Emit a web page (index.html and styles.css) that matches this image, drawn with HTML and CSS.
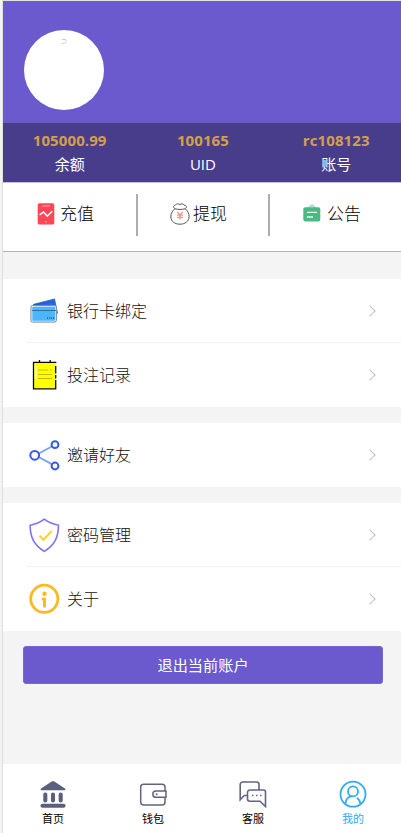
FILE: index.html
```html
<!DOCTYPE html>
<html lang="zh-CN">
<head>
<meta charset="utf-8">
<title>我的</title>
<link rel="stylesheet" href="styles.css">
</head>
<body>
<div class="app">
  <header class="profile"><div class="avatar"><span class="avatar-mark">⊃</span></div></header>
  <section class="stats">
    <div class="stat"><b>105000.99</b><span>余额</span></div>
    <div class="stat"><b>100165</b><span>UID</span></div>
    <div class="stat"><b>rc108123</b><span>账号</span></div>
  </section>
  <section class="actions">
    <div class="action">
      <svg width="18" height="22" viewBox="0 0 18 22"><rect x=".7" y=".3" width="16.6" height="21.2" rx="1.6" fill="#ff4656"/><path d="M5 2.9h8" stroke="#ffa0aa" stroke-width="1.2"/><path d="M2.5 11.8l4-2.7 3.8 4 5-4.8" fill="none" stroke="#fff" stroke-width="1.5"/><circle cx="9" cy="18.8" r=".8" fill="#ffb5bc"/></svg>
      <span>充值</span>
    </div>
    <div class="action">
      <svg width="20" height="22" viewBox="0 0 20 22"><path d="M4.8 5.8C3 4.2 3.3 2.2 5.4 2.2 6.6.2 8.5.5 9.8 1.7c1.5-1.3 3.5-1.1 4.4.5 2.3-.2 3 2 1.1 3.6 2.5 2.2 4 5 3.8 8-.3 4.5-4 7.4-9.2 7.4S1 18.3.8 14c-.1-3.2 1.5-6.1 4-8.2zM5 5.8c3 .8 7 .8 10.2 0" fill="#fff" stroke="#555" stroke-width="1"/><path d="M7.3 9l2.7 3 2.7-3M7 12.2h6M7 14.4h6M10 12v4.4" fill="none" stroke="#ff9189" stroke-width="1.3"/></svg>
      <span>提现</span>
    </div>
    <div class="action">
      <svg width="18" height="22" viewBox="0 0 18 22"><path d="M5 5.5l4-3.4 4 3.4" fill="none" stroke="#a3dcc2" stroke-width="1.8"/><rect x=".3" y="4.3" width="17" height="14.3" rx="2" fill="#4aba85"/><path d="M4 9.4h10M4 14h6" stroke="#e5fff2" stroke-width="1.4"/></svg>
      <span>公告</span>
    </div>
  </section>
  <main class="menus">
    <div class="group">
      <div class="row">
        <svg class="icon" viewBox="0 0 32 32"><path d="M4 9.5l21.5-5.5L28.5 18l-3 2z" fill="#236bf5"/><path d="M4 9.5l21.5-5.5 3 14.5" fill="none" stroke="#24589e" stroke-width=".8"/><path d="M5 9.8l21-3" stroke="#2558b0" stroke-width=".8"/><rect x="2.5" y="11" width="24.5" height="15.6" rx="1.5" fill="#4db5fc" stroke="#e7edf3" stroke-width="1.7"/><rect x="1.9" y="10.4" width="25.5" height="16.7" rx="1.7" fill="none" stroke="#456780" stroke-width=".7"/><path d="M3 15.5h24" stroke="#28699b" stroke-width=".9"/><path d="M18 23h7" stroke="#315d7c" stroke-width="1.7" stroke-dasharray="1 1"/></svg>
        <span>银行卡绑定</span><i class="arrow"></i>
      </div>
      <div class="row">
        <svg class="icon" viewBox="0 0 32 32"><rect x="4.5" y="3.4" width="22.2" height="26.4" rx=".8" fill="#ff0"/><path d="M26.7 4V3.4H4.5v26.4h22.2V21M26.7 7v7.5M26.7 16v3.5M10.5 1v2.5M21.2 1v2.5" fill="none" stroke="#090909" stroke-width="1.3"/><path d="M6.7 6v14" stroke="#ffffad" stroke-width="2"/><path d="M9 11h10M21 11h2M9 15.5h14M9 19.5h14" stroke="#aead00" stroke-width=".8"/></svg>
        <span>投注记录</span><i class="arrow"></i>
      </div>
    </div>
    <div class="group">
      <div class="row">
        <svg class="icon" viewBox="0 0 32 32"><path d="M6.5 16.2L26 5.8M6.5 16.2L26 26.9" stroke="#79a0ff" stroke-width="1.8"/><g fill="#fff" stroke="#3459ec" stroke-width="2"><circle cx="5.7" cy="16.3" r="4.4"/><circle cx="26" cy="5.7" r="3.4"/><circle cx="26" cy="27" r="3.4"/></g></svg>
        <span>邀请好友</span><i class="arrow"></i>
      </div>
    </div>
    <div class="group">
      <div class="row">
        <svg class="icon tall" viewBox="0 0 32 36"><path d="M15.3 2.2c4.5 3.5 9 5.3 14.2 6-.2 12.5-4 19.8-14.2 26.2C5.1 28 1.3 20.7 1.1 8.2c5.2-.7 9.7-2.5 14.2-6z" fill="none" stroke="#8370f4" stroke-width="1.6"/><path d="M10.5 18.7l4 4 8.2-8.8" fill="none" stroke="#ffd414" stroke-width="2"/></svg>
        <span>密码管理</span><i class="arrow"></i>
      </div>
      <div class="row">
        <svg class="icon" viewBox="0 0 32 32"><circle cx="15.3" cy="15.8" r="13.6" fill="none" stroke="#ffb924" stroke-width="2.8"/><circle cx="15.5" cy="10.8" r="2.2" fill="#ffb924"/><path d="M14 15.9h1.5v7.4" fill="none" stroke="#ffb924" stroke-width="3" stroke-linecap="round" stroke-linejoin="round"/></svg>
        <span>关于</span><i class="arrow"></i>
      </div>
    </div>
    <button class="logout">退出当前账户</button>
  </main>
  <nav class="tabs">
    <div class="tab"><svg viewBox="0 0 28 28"><path d="M1.7 10.2V8.7L13 1.2h2l11.3 7.5v1.5z" fill="#5b5f7e"/><path d="M6.3 14.5v6M14 14.5v6M21.7 14.5v6" stroke="#5b5f7e" stroke-width="4.1" stroke-linecap="round"/><rect x="1.5" y="23.8" width="25" height="4" rx="1.8" fill="#5b5f7e"/></svg><span>首页</span></div>
    <div class="tab"><svg viewBox="0 0 28 28"><rect x="1.7" y="4.2" width="24.3" height="20.7" rx="3" fill="none" stroke="#62657f" stroke-width="1.5"/><path d="M27 11H17a3 3 0 0 0 0 6.3h10z" fill="#fff" stroke="#62657f" stroke-width="1.5"/><circle cx="17.6" cy="14.2" r="1" fill="#62657f"/></svg><span>钱包</span></div>
    <div class="tab"><svg viewBox="0 0 28 28"><path d="M20 10V4.5a2.5 2.5 0 0 0-2.5-2.5H3.7a2.5 2.5 0 0 0-2.5 2.5v15.3l4-4.3h3.2" fill="none" stroke="#62657f" stroke-width="1.6"/><path d="M11 10h13.5a2 2 0 0 1 2 2v14.5L21 21.2H11a2.5 2.5 0 0 1-2.5-2.5v-6.2A2.5 2.5 0 0 1 11 10z" fill="#fff" stroke="#62657f" stroke-width="1.6"/><path d="M13 15.5h1.5M17 15.5h1.5M21 15.5h1.5" stroke="#62657f" stroke-width="1.5"/></svg><span>客服</span></div>
    <div class="tab active"><svg viewBox="0 0 28 28"><g fill="none" stroke="#2eaaf7" stroke-width="1.8"><circle cx="14" cy="14.2" r="12.5"/><circle cx="14" cy="11.4" r="5"/><path d="M6.5 23.5c.3-4 2.4-6.5 5.5-7.2M18.4 18.3c1.5 1 2.5 2.6 2.8 4.8" stroke-linecap="round"/></g></svg><span>我的</span></div>
  </nav>
</div>
</body>
</html>
```

FILE: styles.css
```css
* { box-sizing: border-box; }
body { margin: 0; background: #f4f4f4; color: #111; font-family: "Open Sans", "Noto Sans CJK SC", sans-serif; }
svg { display: block; flex: none; }
.app { width: 401px; height: 833px; padding: 1px 0 0 3px; display: flex; flex-direction: column; overflow: hidden; background: #f4f4f4; box-shadow: inset 2px 0 #f3f3f3, inset 3px 0 #dedede, inset 0 1px #e2e2e2; }
.profile { height: 122px; flex: none; padding: 28.5px 21px; background: #6a5acd; }
.avatar { width: 80px; height: 80px; border-radius: 50%; background: #fff; text-align: center; }
.avatar-mark { display: block; padding-top: 7px; font-size: 6px; line-height: 9px; color: #aaa; }
.stats { height: 60px; flex: none; display: grid; grid-template-columns: repeat(3, 133.3px); padding-top: 5px; background: #483d8b; border-bottom: 1px solid #c5c0df; color: #fff; }
.stat { display: flex; flex-direction: column; align-items: center; font-size: 15px; line-height: 24px; }
.stat b { color: #d2a04a; letter-spacing: .1px; }
.actions { height: 69px; flex: none; display: grid; grid-template-columns: 133px 132px 133px; padding-top: 11px; background: #fff; border-bottom: 1px solid #b2b2b2; }
.action { height: 42px; display: flex; align-items: flex-start; gap: 5px; padding-left: 34px; font-size: 17px; font-weight: 300; line-height: 39px; color: #000; }
.action svg { margin-top: 9px; }
.action + .action { border-left: 2px solid #adadad; padding-left: 33px; }
.action:nth-child(2) { gap: 3px; padding-left: 32px; }
.action:nth-child(3) { gap: 6px; }
.menus { flex: 1; padding-top: 26.5px; }
.group { margin-bottom: 16px; background: #fff; }
.row { height: 64px; display: flex; align-items: center; padding: 0 25px 0 26px; position: relative; font-size: 16px; font-weight: 300; }
.row + .row::before { content: ""; position: absolute; left: 24px; right: 0; top: -1px; height: 1.5px; background: #f1f1f1; }
.icon { width: 32px; height: 32px; margin-right: 6px; }
.icon.tall { height: 36px; }
.row span { line-height: 24px; }
.arrow { width: 8px; height: 8px; margin-left: auto; margin-right: 2px; border: solid #c4c4c4; border-width: 1px 1px 0 0; transform: rotate(45deg); }
.logout { display: block; width: 360px; height: 38px; margin-top: -1px; margin-left: 20px; padding: 0; border: 1px solid #7667d2; border-radius: 3px; background: #6a5acd; color: #fff; font: 400 15.2px/36px "Open Sans", "Noto Sans CJK SC", sans-serif; }
.group:has(+ .logout) { margin-bottom: 16.5px; }
.tabs { height: 69px; flex: none; display: grid; grid-template-columns: repeat(4, 100px); background: #fff; color: #000; }
.tab { display: flex; flex-direction: column; align-items: center; padding-top: 16px; font-size: 11px; line-height: 16px; }
.tab svg { width: 28px; height: 28px; margin-bottom: 3px; }
.active { color: #2eaaf7; }
```
